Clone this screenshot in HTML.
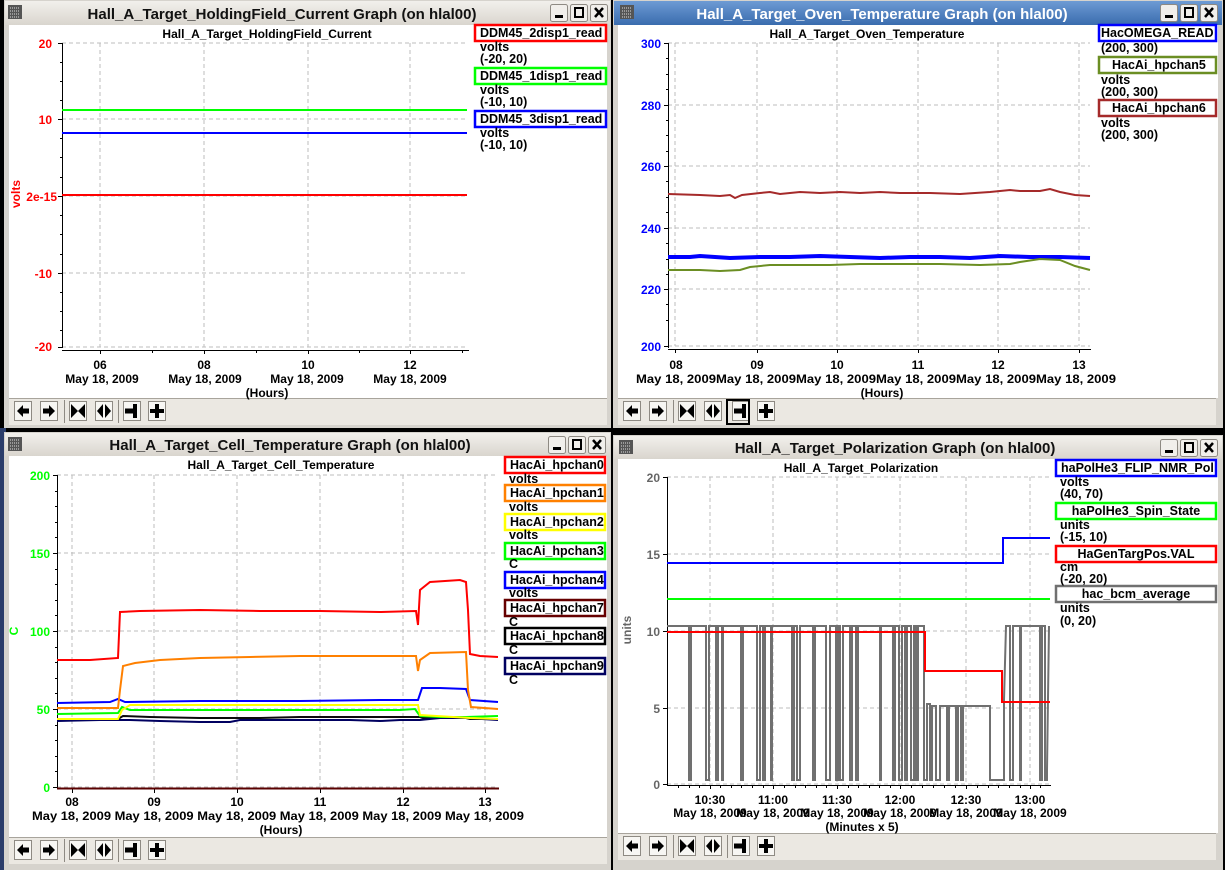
<!DOCTYPE html>
<html><head><meta charset="utf-8"><style>
html,body{margin:0;padding:0;background:#000;}
svg{display:block;font-family:"Liberation Sans",sans-serif;}
.t{font-size:12px;font-weight:bold;fill:#000;}
.l{font-size:12.5px;}
.wt{font-size:15px;font-weight:bold;}
.g{stroke:#bdbdbd;stroke-dasharray:4 3;stroke-width:1;fill:none;}
</style></head><body>
<svg width="1225" height="870" viewBox="0 0 1225 870" xmlns="http://www.w3.org/2000/svg">
<defs>
<linearGradient id="gt" x1="0" y1="0" x2="0" y2="1"><stop offset="0" stop-color="#f2f0ec"/><stop offset="1" stop-color="#d9d5ce"/></linearGradient>
<linearGradient id="bt" x1="0" y1="0" x2="0" y2="1"><stop offset="0" stop-color="#6d9bd4"/><stop offset="1" stop-color="#3a6cae"/></linearGradient>
<g id="tbar">
  <rect x="0" y="0" width="598" height="27" fill="#ebe8e2"/>
  <line x1="0" y1="0.5" x2="598" y2="0.5" stroke="#a8a49c"/>
  <g fill="#f7f6f3" stroke="#8e8a83" stroke-width="1">
    <rect x="5.5" y="3.5" width="17" height="19"/><rect x="31.5" y="3.5" width="17" height="19"/>
    <rect x="60.5" y="3.5" width="17" height="19"/><rect x="86.5" y="3.5" width="17" height="19"/>
    <rect x="114.5" y="3.5" width="17" height="19"/><rect x="139.5" y="3.5" width="17" height="19"/>
  </g>
  <line x1="55.5" y1="2" x2="55.5" y2="25" stroke="#8e8a83"/>
  <line x1="109.5" y1="2" x2="109.5" y2="25" stroke="#8e8a83"/>
  <g fill="#000">
    <path transform="translate(14,13)" d="M-6,0 L0,-6 L0,-2.5 L6,-2.5 L6,2.5 L0,2.5 L0,6 Z"/>
    <path transform="translate(40,13)" d="M6,0 L0,-6 L0,-2.5 L-6,-2.5 L-6,2.5 L0,2.5 L0,6 Z"/>
    <path transform="translate(69,13)" d="M-7,-7 L0,0 L-7,7 Z M7,-7 L0,0 L7,7 Z"/>
    <path transform="translate(95,13)" d="M-1,-7 L-7,0 L-1,7 Z M1,-7 L7,0 L1,7 Z"/>
    <path transform="translate(123,13)" d="M-7,-2.5 H1 V-7 H5 V7 H1 V2.5 H-7 Z"/>
    <path transform="translate(148,13)" d="M-2,-7 H2 V-2 H7 V2 H2 V7 H-2 V2 H-7 V-2 H-2 Z"/>
  </g>
</g>
<g id="wbtn">
  <g fill="#f1efeb" stroke="#8e8a83"><rect x="0.5" y="0.5" width="17" height="17" rx="2"/><rect x="20.5" y="0.5" width="17" height="17" rx="2"/><rect x="40.5" y="0.5" width="17" height="17" rx="2"/></g>
  <rect x="5" y="11" width="8" height="3" fill="#000"/>
  <rect x="25" y="4" width="8" height="9" fill="none" stroke="#000" stroke-width="2"/>
  <path d="M45,4 L53,13 M53,4 L45,13" stroke="#000" stroke-width="2.5"/>
</g>
<g id="wicon">
  <rect x="0" y="0" width="14" height="14" fill="#555"/>
  <path d="M2,3h10M2,6h10M2,9h10M2,12h10" stroke="#ddd" stroke-width="1" stroke-dasharray="1 1"/>
</g>
</defs>

<rect x="0" y="428" width="6" height="442" fill="#2b3d6a"/>

<!-- ============ WINDOW 1 ============ -->
<rect x="4" y="0" width="607" height="428" fill="#d6d3cd"/>
<rect x="5" y="1" width="605" height="24" fill="url(#gt)"/>
<use href="#wicon" x="8" y="5"/>
<text x="282" y="19" class="wt" text-anchor="middle" fill="#111">Hall_A_Target_HoldingField_Current Graph (on hlal00)</text>
<use href="#wbtn" x="550" y="4"/>
<rect x="9" y="25" width="598" height="373" fill="#fff"/>
<use href="#tbar" x="9" y="398"/>
<text x="267" y="38" class="t" text-anchor="middle">Hall_A_Target_HoldingField_Current</text>
<g class="g"><line x1="62" y1="43" x2="467" y2="43"/><line x1="62" y1="119" x2="467" y2="119"/><line x1="62" y1="196" x2="467" y2="196"/><line x1="62" y1="273" x2="467" y2="273"/><line x1="62" y1="347" x2="467" y2="347"/>
<line x1="100" y1="43" x2="100" y2="347"/><line x1="204" y1="43" x2="204" y2="347"/><line x1="308" y1="43" x2="308" y2="347"/><line x1="410" y1="43" x2="410" y2="347"/></g>
<g stroke="#000"><line x1="62.5" y1="43" x2="62.5" y2="348"/><line x1="62" y1="350.5" x2="469" y2="350.5"/>
<path d="M58,43.5h4M58,119.5h4M58,196.5h4M58,273.5h4M58,347.5h4M60,62.5h2M60,81.5h2M60,100.5h2M60,138.5h2M60,157.5h2M60,177.5h2M60,215.5h2M60,234.5h2M60,254.5h2M60,292.5h2M60,311.5h2M60,330.5h2"/>
<path d="M100.5,350v4M204.5,350v4M308.5,350v4M410.5,350v4M152.5,350v3M256.5,350v3M359.5,350v3M462.5,350v3"/></g>
<g class="t" text-anchor="end" style="fill:#f00"><text x="52" y="48">20</text><text x="52" y="124">10</text><text x="57" y="201">2e-15</text><text x="52" y="278">-10</text><text x="52" y="351">-20</text></g>
<text transform="translate(20,194) rotate(-90)" class="t" style="fill:#f00" text-anchor="middle">volts</text>
<line x1="62" y1="110" x2="467" y2="110" stroke="#0f0" stroke-width="2"/>
<line x1="62" y1="133" x2="467" y2="133" stroke="#00f" stroke-width="2"/>
<line x1="62" y1="195" x2="467" y2="195" stroke="#f00" stroke-width="2"/>
<g class="t" text-anchor="middle"><text x="100" y="369">06</text><text x="204" y="369">08</text><text x="308" y="369">10</text><text x="410" y="369">12</text>
<text x="102" y="383">May 18, 2009</text><text x="205" y="383">May 18, 2009</text><text x="307" y="383">May 18, 2009</text><text x="410" y="383">May 18, 2009</text><text x="267" y="397">(Hours)</text></g>
<g fill="#fff" stroke-width="2.5"><rect x="475" y="25" width="131" height="16" stroke="#f00"/><rect x="475" y="68" width="131" height="16" stroke="#0f0"/><rect x="475" y="111" width="131" height="16" stroke="#00f"/></g>
<g class="t l"><text x="480" y="37">DDM45_2disp1_read</text><text x="480" y="51">volts</text><text x="480" y="63">(-20, 20)</text>
<text x="480" y="80">DDM45_1disp1_read</text><text x="480" y="94">volts</text><text x="480" y="106">(-10, 10)</text>
<text x="480" y="123">DDM45_3disp1_read</text><text x="480" y="137">volts</text><text x="480" y="149">(-10, 10)</text></g>

<!-- ============ WINDOW 2 ============ -->
<rect x="613" y="0" width="610" height="428" fill="#d6d3cd"/>
<rect x="614" y="1" width="608" height="24" fill="url(#bt)"/>
<use href="#wicon" x="620" y="5"/>
<text x="882" y="19" class="wt" text-anchor="middle" fill="#fff">Hall_A_Target_Oven_Temperature Graph (on hlal00)</text>
<g transform="translate(1160,4)"><use href="#wbtn"/></g>
<rect x="618" y="25" width="600" height="373" fill="#fff"/>
<use href="#tbar" x="618" y="398"/>
<rect x="727" y="400" width="22" height="24" fill="none" stroke="#000" stroke-width="2"/>
<text x="867" y="38" class="t" text-anchor="middle">Hall_A_Target_Oven_Temperature</text>
<g class="g"><line x1="668" y1="43" x2="1090" y2="43"/><line x1="668" y1="105" x2="1090" y2="105"/><line x1="668" y1="166" x2="1090" y2="166"/><line x1="668" y1="228" x2="1090" y2="228"/><line x1="668" y1="289" x2="1090" y2="289"/><line x1="668" y1="346" x2="1090" y2="346"/>
<line x1="675" y1="43" x2="675" y2="346"/><line x1="757" y1="43" x2="757" y2="346"/><line x1="837" y1="43" x2="837" y2="346"/><line x1="918" y1="43" x2="918" y2="346"/><line x1="998" y1="43" x2="998" y2="346"/><line x1="1079" y1="43" x2="1079" y2="346"/></g>
<g stroke="#000"><line x1="668.5" y1="43" x2="668.5" y2="348"/><line x1="668" y1="349.5" x2="1091" y2="349.5"/>
<path d="M664,43.5h4M664,105.5h4M664,166.5h4M664,228.5h4M664,289.5h4M664,346.5h4M666,58.5h2M666,74.5h2M666,89.5h2M666,120.5h2M666,135.5h2M666,151.5h2M666,181.5h2M666,197.5h2M666,212.5h2M666,243.5h2M666,259.5h2M666,274.5h2M666,304.5h2M666,320.5h2"/>
<path d="M675.5,349v4M757.5,349v4M837.5,349v4M918.5,349v4M998.5,349v4M1079.5,349v4"/></g>
<g class="t" text-anchor="end" style="fill:#00f"><text x="661" y="48">300</text><text x="661" y="110">280</text><text x="661" y="171">260</text><text x="661" y="233">240</text><text x="661" y="294">220</text><text x="661" y="351">200</text></g>
<path d="M668,194 L700,195 L720,196 L730,195 L735,198 L742,195 L760,193 L770,192 L780,194 L800,192 L820,193 L840,192 L860,193 L880,192 L900,193 L930,193 L960,194 L990,192 L1010,190 L1020,191 L1040,191 L1050,189 L1060,192 L1075,195 L1090,196" stroke="#a52a2a" stroke-width="2" fill="none"/>
<path d="M668,257 L690,257 L700,256 L730,258 L760,257 L790,257 L820,256 L850,257 L880,258 L910,257 L940,257 L970,258 L1000,256 L1030,257 L1060,257 L1090,258" stroke="#00f" stroke-width="4" fill="none"/>
<path d="M668,270 L700,270 L720,271 L740,270 L750,267 L770,265 L800,265 L830,265 L860,264 L900,264 L940,264 L980,265 L1010,264 L1020,262 L1040,259 L1060,260 L1075,266 L1090,270" stroke="#6b8e23" stroke-width="2" fill="none"/>
<g class="t" text-anchor="middle"><text x="676" y="369">08</text><text x="757" y="369">09</text><text x="837" y="369">10</text><text x="918" y="369">11</text><text x="998" y="369">12</text><text x="1079" y="369">13</text></g>
<text x="636" y="383" class="t" textLength="480" lengthAdjust="spacingAndGlyphs">May 18, 2009May 18, 2009May 18, 2009May 18, 2009May 18, 2009May 18, 2009</text>
<text x="882" y="397" class="t" text-anchor="middle">(Hours)</text>
<g fill="#fff" stroke-width="2.5"><rect x="1099" y="25" width="117" height="16" stroke="#00f"/><rect x="1099" y="57" width="117" height="16" stroke="#6b8e23"/><rect x="1099" y="100" width="117" height="16" stroke="#a52a2a"/></g>
<g class="t l"><text x="1101" y="37">HacOMEGA_READ</text><text x="1101" y="52">(200, 300)</text>
<text x="1112" y="69">HacAi_hpchan5</text><text x="1101" y="84">volts</text><text x="1101" y="96">(200, 300)</text>
<text x="1112" y="112">HacAi_hpchan6</text><text x="1101" y="127">volts</text><text x="1101" y="139">(200, 300)</text></g>

<!-- ============ WINDOW 3 ============ -->
<rect x="4" y="432" width="607" height="438" fill="#d6d3cd"/>
<rect x="5" y="433" width="605" height="23" fill="url(#gt)"/>
<use href="#wicon" x="8" y="437"/>
<text x="290" y="450" class="wt" text-anchor="middle" fill="#111">Hall_A_Target_Cell_Temperature Graph (on hlal00)</text>
<use href="#wbtn" x="548" y="436"/>
<rect x="9" y="456" width="598" height="381" fill="#fff"/>
<use href="#tbar" x="9" y="837"/>
<text x="281" y="469" class="t" text-anchor="middle">Hall_A_Target_Cell_Temperature</text>
<g class="g"><line x1="57" y1="475" x2="498" y2="475"/><line x1="57" y1="553" x2="498" y2="553"/><line x1="57" y1="631" x2="498" y2="631"/><line x1="57" y1="709" x2="498" y2="709"/><line x1="57" y1="787" x2="498" y2="787"/>
<line x1="72" y1="475" x2="72" y2="787"/><line x1="154" y1="475" x2="154" y2="787"/><line x1="237" y1="475" x2="237" y2="787"/><line x1="320" y1="475" x2="320" y2="787"/><line x1="403" y1="475" x2="403" y2="787"/><line x1="485" y1="475" x2="485" y2="787"/></g>
<g stroke="#000"><line x1="57.5" y1="475" x2="57.5" y2="789"/>
<path d="M53,475.5h4M53,553.5h4M53,631.5h4M53,709.5h4M53,787.5h4M55,491.5h2M55,506.5h2M55,522.5h2M55,537.5h2M55,569.5h2M55,584.5h2M55,600.5h2M55,615.5h2M55,647.5h2M55,662.5h2M55,678.5h2M55,693.5h2M55,725.5h2M55,740.5h2M55,756.5h2M55,771.5h2"/>
<path d="M72.5,789v4M154.5,789v4M237.5,789v4M320.5,789v4M403.5,789v4M485.5,789v4"/></g>
<line x1="57" y1="788.5" x2="499" y2="788.5" stroke="#5a0000" stroke-width="2"/>
<g class="t" text-anchor="end" style="fill:#0f0"><text x="50" y="480">200</text><text x="50" y="558">150</text><text x="50" y="636">100</text><text x="50" y="714">50</text><text x="50" y="792">0</text></g>
<text transform="translate(18,631) rotate(-90)" class="t" style="fill:#0f0" text-anchor="middle">C</text>
<path d="M57,720 L80,720 L110,719 L118,719 L123,716 L150,717 L200,718 L260,718 L300,717 L350,717 L380,717 L420,717 L423,718 L440,718 L466,718 L470,719 L498,719" stroke="#0c0c0c" stroke-width="2" fill="none"/>
<path d="M57,721 L100,720 L130,720 L160,721 L200,722 L230,722 L240,720 L300,720 L350,720 L380,721 L400,720 L420,720 L440,718 L466,718 L498,720" stroke="#000060" stroke-width="2" fill="none"/>
<path d="M57,714 L118,713 L122,707 L130,710 L200,710 L300,710 L400,710 L415,709 L420,716 L440,717 L466,717 L498,716" stroke="#0f0" stroke-width="2" fill="none"/>
<path d="M57,719 L118,719 L122,710 L130,705 L200,705 L300,705 L410,705 L418,705 L420,715 L470,718 L498,719" stroke="#ff0" stroke-width="2" fill="none"/>
<path d="M57,703 L110,702 L118,699 L125,702 L200,701 L300,701 L380,700 L418,700 L422,688 L440,688 L466,689 L470,700 L498,702" stroke="#00f" stroke-width="2" fill="none"/>
<path d="M57,708 L118,708 L120,690 L123,666 L135,663 L160,660 L200,658 L250,657 L300,656 L350,656 L416,656 L418,671 L420,660 L430,653 L466,652 L468,690 L471,707 L498,709" stroke="#ff8000" stroke-width="2" fill="none"/>
<path d="M57,660 L90,660 L118,658 L120,612 L140,611 L200,610 L260,611 L320,611 L380,612 L416,611 L418,625 L420,590 L430,582 L460,580 L466,582 L468,610 L470,654 L480,656 L498,657" stroke="#f00" stroke-width="2" fill="none"/>
<g class="t" text-anchor="middle"><text x="72" y="806">08</text><text x="154" y="806">09</text><text x="237" y="806">10</text><text x="320" y="806">11</text><text x="403" y="806">12</text><text x="485" y="806">13</text></g>
<text x="32" y="820" class="t" textLength="492" lengthAdjust="spacingAndGlyphs">May 18, 2009 May 18, 2009 May 18, 2009 May 18, 2009 May 18, 2009 May 18, 2009</text>
<text x="281" y="834" class="t" text-anchor="middle">(Hours)</text>
<g fill="#fff" stroke-width="2.5"><rect x="505" y="457" width="100" height="16" stroke="#f00"/><rect x="505" y="485" width="100" height="16" stroke="#ff8000"/><rect x="505" y="514" width="100" height="16" stroke="#ff0"/><rect x="505" y="543" width="100" height="16" stroke="#0f0"/><rect x="505" y="572" width="100" height="16" stroke="#00f"/><rect x="505" y="600" width="100" height="16" stroke="#600"/><rect x="505" y="628" width="100" height="16" stroke="#000"/><rect x="505" y="658" width="100" height="16" stroke="#000060"/></g>
<g class="t l"><text x="510" y="469">HacAi_hpchan0</text><text x="509" y="483">volts</text>
<text x="510" y="497">HacAi_hpchan1</text><text x="509" y="511">volts</text>
<text x="510" y="526">HacAi_hpchan2</text><text x="509" y="539">volts</text>
<text x="510" y="555">HacAi_hpchan3</text><text x="509" y="568">C</text>
<text x="510" y="584">HacAi_hpchan4</text><text x="509" y="597">volts</text>
<text x="510" y="612">HacAi_hpchan7</text><text x="509" y="626">C</text>
<text x="510" y="640">HacAi_hpchan8</text><text x="509" y="654">C</text>
<text x="510" y="670">HacAi_hpchan9</text><text x="509" y="684">C</text></g>

<!-- ============ WINDOW 4 ============ -->
<rect x="613" y="435" width="610" height="435" fill="#d6d3cd"/>
<rect x="614" y="436" width="608" height="23" fill="url(#gt)"/>
<use href="#wicon" x="619" y="440"/>
<text x="895" y="453" class="wt" text-anchor="middle" fill="#111">Hall_A_Target_Polarization Graph (on hlal00)</text>
<use href="#wbtn" x="1160" y="439"/>
<rect x="618" y="459" width="600" height="374" fill="#fff"/>
<use href="#tbar" x="618" y="833"/>
<text x="861" y="472" class="t" text-anchor="middle">Hall_A_Target_Polarization</text>
<g class="g"><line x1="667" y1="477" x2="1050" y2="477"/><line x1="667" y1="554" x2="1050" y2="554"/><line x1="667" y1="631" x2="1050" y2="631"/><line x1="667" y1="708" x2="1050" y2="708"/><line x1="667" y1="784" x2="1050" y2="784"/>
<line x1="710" y1="477" x2="710" y2="784"/><line x1="773" y1="477" x2="773" y2="784"/><line x1="837" y1="477" x2="837" y2="784"/><line x1="900" y1="477" x2="900" y2="784"/><line x1="966" y1="477" x2="966" y2="784"/><line x1="1030" y1="477" x2="1030" y2="784"/></g>
<g stroke="#000"><line x1="667.5" y1="477" x2="667.5" y2="786"/><line x1="667" y1="785.5" x2="1051" y2="785.5"/>
<path d="M663,477.5h4M663,554.5h4M663,631.5h4M663,708.5h4M663,784.5h4"/>
<path d="M710.5,785v4M773.5,785v4M837.5,785v4M900.5,785v4M966.5,785v4M1030.5,785v4M678.5,785v3M689.5,785v3M699.5,785v3M720.5,785v3M731.5,785v3M741.5,785v3M752.5,785v3M763.5,785v3M784.5,785v3M795.5,785v3M805.5,785v3M816.5,785v3M826.5,785v3M848.5,785v3M858.5,785v3M869.5,785v3M879.5,785v3M890.5,785v3M911.5,785v3M922.5,785v3M933.5,785v3M944.5,785v3M955.5,785v3M977.5,785v3M988.5,785v3M998.5,785v3M1009.5,785v3M1020.5,785v3M1040.5,785v3"/></g>
<g class="t" text-anchor="end" style="fill:#666"><text x="660" y="482">20</text><text x="660" y="559">15</text><text x="660" y="636">10</text><text x="660" y="713">5</text><text x="660" y="789">0</text></g>
<text transform="translate(631,630) rotate(-90)" class="t" style="fill:#666" text-anchor="middle">units</text>
<path d="M667,626 H689 V780 H691 V626 H706 V780 H709 V626 H716 V780 H718 V626 H722 V780 H723 V626 H741 V780 H743 V626 H757 V780 H760 V626 H763 V780 H765 V626 H771 V780 H772 V626 H792 V780 H794 V626 H797 V780 H800 V626 H813 V780 H815 V626 H826 V780 H830 V626 H836 V780 H838 V626 H840 V780 H843 V626 H850 V780 H852 V626 H856 V780 H858 V626 H880 V780 H881 V626 H893 V780 H895 V626 H899 V780 H902 V626 H905 V780 H907 V626 H911 V780 H914 V626 H916 V780 H918 V626 H924 V780 H927 V704 H930 V780 H932 V706 H936 V780 H940 V706 H947 V780 H949 V706 H956 V780 H958 V706 H961 V780 H963 V706 H990 V780 H1004 V700 L1006,626 H1010 V780 H1013 V626 H1020 V780 H1021 V626 H1040 V780 H1042 V626 H1045 V780 H1047 V770 L1049,626" stroke="#707070" stroke-width="2" fill="none"/>
<path d="M667,632 H925 V671 H1002 V702 H1050" stroke="#f00" stroke-width="2" fill="none"/>
<path d="M667,563 H1003 V538 H1050" stroke="#00f" stroke-width="2" fill="none"/>
<line x1="667" y1="599" x2="1050" y2="599" stroke="#0f0" stroke-width="2"/>
<g class="t" text-anchor="middle"><text x="710" y="804">10:30</text><text x="773" y="804">11:00</text><text x="837" y="804">11:30</text><text x="900" y="804">12:00</text><text x="966" y="804">12:30</text><text x="1030" y="804">13:00</text>
<text x="710" y="817">May 18, 2009</text><text x="773" y="817">May 18, 2009</text><text x="837" y="817">May 18, 2009</text><text x="900" y="817">May 18, 2009</text><text x="966" y="817">May 18, 2009</text><text x="1030" y="817">May 18, 2009</text>
<text x="862" y="831">(Minutes x 5)</text></g>
<g fill="#fff" stroke-width="2.5"><rect x="1056" y="460" width="160" height="16" stroke="#00f"/><rect x="1056" y="503" width="160" height="16" stroke="#0f0"/><rect x="1056" y="546" width="160" height="16" stroke="#f00"/><rect x="1056" y="586" width="160" height="16" stroke="#707070"/></g>
<g class="t l"><text x="1061" y="472">haPolHe3_FLIP_NMR_Pol</text><text x="1060" y="486">volts</text><text x="1060" y="498">(40, 70)</text>
<text x="1136" y="515" text-anchor="middle">haPolHe3_Spin_State</text><text x="1060" y="529">units</text><text x="1060" y="541">(-15, 10)</text>
<text x="1136" y="558" text-anchor="middle">HaGenTargPos.VAL</text><text x="1060" y="571">cm</text><text x="1060" y="583">(-20, 20)</text>
<text x="1136" y="598" text-anchor="middle">hac_bcm_average</text><text x="1060" y="612">units</text><text x="1060" y="625">(0, 20)</text></g>
</svg>
</body></html>
